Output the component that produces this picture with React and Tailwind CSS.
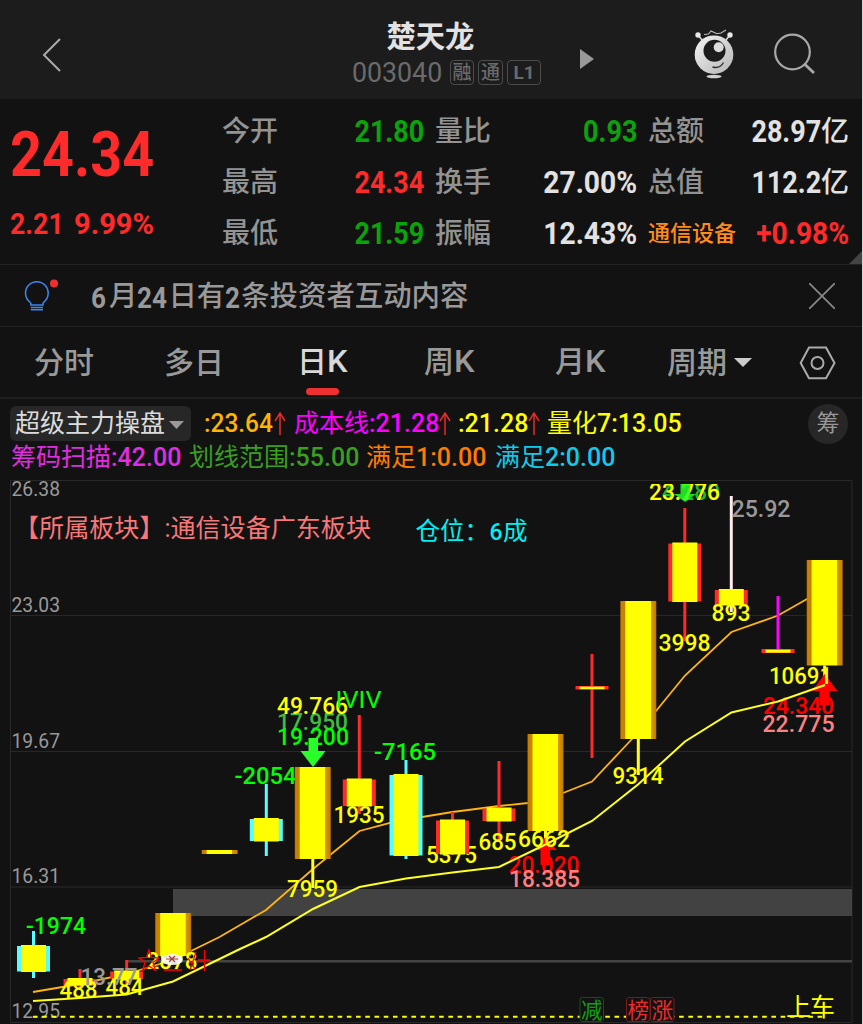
const UP = '#ff2a2a';
const CYAN = '#55ffff';
const YELLOW = '#ffff00';
const GREEN = '#00ff00';

const QUOTES = [
    [
        { label: '今开', value: '21.80', color: 'text-[#0ba30b]' },
        { label: '量比', value: '0.93', color: 'text-[#0ba30b]' },
        { label: '总额', value: '28.97', unit: '亿', color: 'text-[#e2e2e2]' },
    ],
    [
        { label: '最高', value: '24.34', color: 'text-[#ff2a2a]' },
        { label: '换手', value: '27.00%', color: 'text-[#e2e2e2]' },
        { label: '总值', value: '112.2', unit: '亿', color: 'text-[#e2e2e2]' },
    ],
    [
        { label: '最低', value: '21.59', color: 'text-[#0ba30b]' },
        { label: '振幅', value: '12.43%', color: 'text-[#e2e2e2]' },
        { label: '通信设备', value: '+0.98%', color: 'text-[#ff2a2a]', sector: true },
    ],
];

// gold = limit-up day, side = body with coloured edges
const CANDLES = [
    { x: 33.5, type: 'side', color: CYAN, top: 946, bottom: 971.5, high: 931, low: 978 },
    { x: 80, type: 'side', color: UP, top: 979, bottom: 985, high: 969, low: 990 },
    { x: 126.7, type: 'side', color: UP, top: 971.5, bottom: 979, high: 960, low: 984 },
    { x: 173.2, type: 'gold', top: 913, bottom: 956 },
    { x: 219.7, type: 'gold', top: 850, bottom: 854 },
    { x: 266.3, type: 'side', color: CYAN, top: 819, bottom: 841, high: 784, low: 856 },
    { x: 312.8, type: 'gold', top: 767, bottom: 859, low: 888 },
    { x: 359.3, type: 'side', color: UP, top: 779.5, bottom: 806, high: 715, low: 814 },
    { x: 406, type: 'side', color: CYAN, top: 775, bottom: 855.5, high: 760, low: 859 },
    { x: 452.5, type: 'side', color: UP, top: 820.5, bottom: 854, high: 812, low: 855 },
    { x: 499, type: 'side', color: UP, top: 808.5, bottom: 821, high: 761, low: 842 },
    { x: 545.5, type: 'gold', top: 734, bottom: 831, low: 845 },
    { x: 592, type: 'side', color: UP, top: 686, bottom: 689.5, high: 654, low: 758, flat: true },
    { x: 638.3, type: 'gold', top: 601, bottom: 739, low: 775 },
    { x: 684.8, type: 'side', color: UP, top: 543.5, bottom: 601.5, high: 508, low: 641 },
    { x: 731.3, type: 'side', color: UP, wick: '#ffe9e9', top: 590, bottom: 605, high: 496, low: 612 },
    { x: 778, type: 'side', color: UP, wick: '#f0f', top: 649, bottom: 653, high: 596, low: 650, flat: true },
    { x: 824.7, type: 'gold', top: 560, bottom: 665.5, low: 684 },
];

const COST_LINE = '33,992 80,984 126.5,974 173,960 191,951 219.5,937 266,910 313,869 330,855 359.5,831 390,823 406,819.5 422,817 452.5,812 499,806 528,803 545,799 563,793 592,781.5 632,739 656,711 685,675.5 731.5,632 778,615.5 807,599 824,590';
const BASE_LINE = '33,1001 80,998 126.5,994.5 173,981.5 219.5,959 240,949 266,937 313,909 359.5,887 406,878.5 452.5,872.5 499,867 545.5,844.5 592,821 638,784.5 685,741.5 731.5,712.5 778,701.5 825,685';

// text, x, baseline, width, colour
const UNDER_LABELS = [
    ['17.950', 277, 730, 71, '#43b943'],
    ['24.340', 763, 714, 71, '#ff0000'],
    ['20.020', 508.5, 873, 71, '#ff0000'],
    ['-1974', 26, 934, 60, GREEN],
    ['49.766', 277, 714, 71, YELLOW],
    ['19.200', 277, 745, 72, GREEN],
    ['-7165', 374, 760, 62, GREEN],
    ['-2054', 234.5, 784, 62, GREEN],
    ['5375', 426, 862.5, 51, YELLOW],
];

const LABELS = [
    ['893', 711.5, 621, 39, YELLOW],
    ['3998', 658.5, 651, 52, YELLOW],
    ['7959', 287, 897, 51, YELLOW],
    ['1935', 333.5, 823, 51, YELLOW],
    ['685', 478.5, 850, 38, YELLOW],
    ['6662', 518, 846.5, 52, YELLOW],
    ['18.385', 509, 887, 71, '#ff8080'],
    ['9314', 612.5, 784, 51, YELLOW],
    ['10691', 769, 684, 63, YELLOW],
    ['22.775', 762.5, 732, 72, '#ff8080'],
    ['25.92', 731.5, 517, 59, '#999'],
    ['488', 59.5, 998, 38, YELLOW],
    ['484', 105.5, 995, 38, YELLOW],
    ['2878', 146.5, 969, 51, YELLOW],
    ['13.77', 80.5, 985, 57, '#999'],
];

const AXIS = [
    ['26.38', 496],
    ['23.03', 612],
    ['19.67', 748],
    ['16.31', 883],
    ['12.95', 1018],
];

const ChartText = ({ item, size = 24, weight = 500 }) => {
    const [text, x, y, width, color] = item;
    return (
        <text
            x={x}
            y={y}
            fill={color}
            fontSize={size}
            fontWeight={weight}
            textLength={width}
            lengthAdjust="spacingAndGlyphs"
        >
            {text}
        </text>
    );
};

const Candle = ({ c }) => {
    const height = c.bottom - c.top;
    if (c.type === 'gold') {
        return (
            <g>
                {c.low && <rect x={c.x - 1.5} y={c.bottom} width="3" height={c.low - c.bottom} fill="#ffff19" />}
                <rect x={c.x - 18} y={c.top} width="36" height={height} fill="url(#gold)" />
            </g>
        );
    }
    return (
        <g>
            <rect x={c.x - 1.5} y={c.high} width="3" height={c.low - c.high} fill={c.wick || c.color} />
            <rect x={c.x - 16.5} y={c.top} width="33" height={height} fill={c.color} />
            <rect
                x={c.x - 12.5}
                y={c.flat ? c.top + 0.7 : c.top - 1}
                width="25"
                height={c.flat ? height - 1 : height + 1.5}
                fill={YELLOW}
            />
        </g>
    );
};

// Condensed figures: the box has the final width, the glyphs are squeezed into it
const Num = ({ children, className }) => (
    <span className={`inline-block shrink-0 origin-left whitespace-nowrap ${className}`}>{children}</span>
);

const Header = () => (
    <header className="flex h-[99px] bg-[#1c1c1c]">
        <div className="flex w-[352px] items-center pl-[42px] pt-[11px]">
            <svg className="h-[34px] w-[20px]" viewBox="0 0 20 34" fill="none" stroke="#aaa" strokeWidth="2">
                <path d="M18 1 L2 17 L18 33" />
            </svg>
        </div>
        <div className="flex w-[220px] flex-col pt-[20px]">
            <h1 className="pl-[34.500px] text-[29.300px] leading-[35px] font-bold text-[#e2e2e2]">楚天龙</h1>
            <div className="flex h-[35px] items-center text-[#6a6a6a]">
                <Num className="w-[98px] scale-x-[0.955] text-[28px]">003040</Num>
                <div className="flex gap-1 text-[19px] leading-[22px] font-medium">
                    <span className="flex h-[25px] w-[24px] items-center justify-center rounded border border-[#4c4c4c]">融</span>
                    <span className="flex h-[25px] w-[25px] items-center justify-center rounded border border-[#4c4c4c]">通</span>
                    <span className="flex h-[25px] w-[34px] items-center justify-center rounded border border-[#4c4c4c] font-bold">L1</span>
                </div>
            </div>
        </div>
        <div className="flex flex-1 items-start">
            <svg className="mt-[49px] ml-[8px] h-[20px] w-[14px]" viewBox="0 0 14 20" fill="#999">
                <path d="M0 0 L14 10 L0 20Z" />
            </svg>
            <svg className="mt-[28px] ml-[99px] h-[52px] w-[42px]" viewBox="693 28 42 52" fill="none">
                <defs>
                    <linearGradient id="robot" x1="0" y1="0" x2="1" y2="1">
                        <stop offset="0" stopColor="#f4f4f4" />
                        <stop offset="1" stopColor="#b5b5b5" />
                    </linearGradient>
                </defs>
                <path d="M698 35 L702 40 M730 35 L726 40" stroke="#ddd" strokeWidth="1.5" />
                <circle cx="698" cy="35" r="2.700" fill="#e8e8e8" />
                <circle cx="730" cy="35" r="2.700" fill="#e8e8e8" />
                <path d="M704 34.500 L708.500 34 L711 31 L717 33.800 L721 33 L726 30" stroke="#bbb" strokeWidth="1.1" />
                <circle cx="714" cy="54.700" r="19.300" fill="url(#robot)" />
                <circle cx="714.500" cy="50.800" r="11" fill="#1c1c1c" />
                <circle cx="718.700" cy="47.300" r="5" fill="#dcdcdc" />
                <path d="M712.500 67 Q720 69 723.500 62.500" stroke="#333" strokeWidth="1.3" />
                <ellipse cx="714" cy="76.500" rx="7.500" ry="1.800" fill="#d0d0d0" />
            </svg>
            <svg className="mt-[31px] ml-[38px] h-[44px] w-[44px]" viewBox="773 31 44 44" fill="none" stroke="#a8a8a8">
                <circle cx="792.500" cy="52" r="17.300" strokeWidth="2.200" />
                <path d="M804.500 64 L814 73" strokeWidth="2.800" />
            </svg>
        </div>
    </header>
);

const Quote = () => (
    <section className="flex h-[166px] border-b border-[#232323]">
        <div className="w-[222px] pl-[10px] text-[#ff2a2a]">
            <Num className="mt-[18px] block h-[76px] w-[146px] scale-x-[0.885] text-[63px] leading-[76px] font-bold">24.34</Num>
            <div className="mt-[11px] flex h-[38px] items-center text-[30px] font-bold">
                <Num className="w-[64px] scale-x-[0.89]">2.21</Num>
                <Num className="w-[80px] scale-x-[0.97]">9.99%</Num>
            </div>
        </div>
        <div className="flex-1 pt-[7px]">
            {QUOTES.map((row, i) => (
                <div key={i} className="flex h-[51px] items-center">
                    {row.map((q, col) => (
                        <div key={q.label} className={`flex items-center ${col < 2 ? 'w-[213px] pr-[11px]' : 'w-[201px]'}`}>
                            <span
                                className={
                                    q.sector
                                        ? 'text-[22px] font-medium text-[#ff8c1a]'
                                        : 'text-[28px] leading-[44px] font-medium text-[#939393]'
                                }
                            >
                                {q.label}
                            </span>
                            <span className={`flex flex-1 items-center justify-end ${q.color}`}>
                                <span
                                    className={`inline-block origin-right text-[31px] leading-[44px] font-bold whitespace-nowrap ${q.value.endsWith('%') ? 'scale-x-[0.91]' : 'scale-x-[0.87]'}`}
                                >
                                    {q.value}
                                </span>
                                {q.unit && <span className="text-[28px] leading-[44px] font-medium">{q.unit}</span>}
                            </span>
                        </div>
                    ))}
                </div>
            ))}
        </div>
        <svg className="-ml-[13px] h-[13px] w-[13px] self-end" viewBox="0 0 13 13" fill="#444">
            <path d="M13 0 V13 H0Z" />
        </svg>
    </section>
);

const Notice = () => (
    <section className="flex h-[62px] items-center border-b border-[#232323]">
        <svg className="ml-[20px] h-[40px] w-[42px]" viewBox="20 276 42 40" fill="none" stroke="#3d86f0" strokeWidth="1.500">
            <path d="M30.800 305 V303 Q25.500 299 25.500 293 A11.300 11.300 0 0 1 48.200 293 Q48.200 299 43 303 V305Z" />
            <path d="M30.800 307.500 H43 M30.800 309.800 H43" />
            <circle cx="54" cy="283.500" r="4" fill="#f03030" stroke="none" />
        </svg>
        <p className="ml-[29px] flex flex-1 items-center pt-[3px] text-[28.400px] font-medium text-[#999]">
            <Num className="w-[18px] scale-x-[0.87] text-[30px] font-bold">6</Num>月
            <Num className="w-[31px] scale-x-[0.87] text-[30px] font-bold">24</Num>日有
            <Num className="w-[16px] scale-x-[0.87] text-[30px] font-bold">2</Num>条投资者互动内容
        </p>
        <svg className="mr-[27px] h-[26px] w-[26px]" viewBox="0 0 26 26" stroke="#888" strokeWidth="1.700">
            <path d="M0 0 L26 26 M26 0 L0 26" />
        </svg>
    </section>
);

const Tabs = () => (
    <nav className="flex h-[72px] items-center border-b-2 border-[#1e1e1e] pl-[34px] text-[30px] font-medium text-[#999]">
        <span className="w-[130px]">分时</span>
        <span className="w-[133px]">多日</span>
        <span className="relative w-[127px] text-[#d8d8d8]">
            日<span className="inline-block origin-left scale-x-[1.050] text-[31px]">K</span>
            <span className="absolute -bottom-[10px] left-[9px] h-[7px] w-[33px] rounded-full bg-[#ee3030]" />
        </span>
        <span className="w-[131px]">
            周<span className="inline-block origin-left scale-x-[1.050] text-[31px]">K</span>
        </span>
        <span className="w-[112px]">
            月<span className="inline-block origin-left scale-x-[1.050] text-[31px]">K</span>
        </span>
        <span>周期</span>
        <svg className="mt-[1px] ml-[7px] h-[9px] w-[18px]" viewBox="0 0 18 9" fill="#ccc">
            <path d="M0 0 H18 L9 9Z" />
        </svg>
        <svg className="mt-[2px] ml-[47px] h-[34px] w-[37px]" viewBox="799 346 37 34" fill="none" stroke="#aaa" strokeWidth="2">
            <path d="M800.700 363 L809 347.600 H826 L834.500 363 L826 378.300 H809Z" />
            <circle cx="817.500" cy="363" r="6" />
        </svg>
    </nav>
);

const RiseArrow = () => (
    <svg className="h-[23px] w-[12px] shrink-0" viewBox="0 0 12 23" fill="none" stroke="#e82a2a" strokeWidth="1.500">
        <path d="M6 23 V1 M1 9 L6 1 L11 9" />
    </svg>
);

const Indicators = () => (
    <section className="relative h-[77px] pt-[7px] pl-[10px] text-[25px]">
        <div className="flex h-[35px] items-center">
            <div className="mr-[13px] flex h-[35px] w-[181px] shrink-0 items-center rounded-md bg-[#272727] pl-[5px] text-[#dcdcdc]">
                超级主力操盘
                <svg className="mt-[2px] ml-[4px] h-[8px] w-[15px]" viewBox="0 0 15 8" fill="#999">
                    <path d="M0 0 H15 L7.500 8Z" />
                </svg>
            </div>
            <Num className="w-[70px] scale-x-[0.98] font-medium text-[#ffb400]">:23.64</Num>
            <RiseArrow />
            <span className="ml-[8px] text-[#f0f]">成本线</span>
            <Num className="w-[70px] font-medium text-[#f0f]">:21.28</Num>
            <RiseArrow />
            <Num className="ml-[7px] w-[70px] font-medium text-[#ff0]">:21.28</Num>
            <RiseArrow />
            <span className="ml-[7px] text-[#ff0]">量化</span>
            <Num className="w-[84px] font-medium text-[#ff0]">7:13.05</Num>
        </div>
        <div className="flex h-[34px] items-center pl-px">
            <span className="text-[#e02de0]">筹码扫描</span>
            <Num className="w-[78px] font-medium text-[#e02de0]">:42.00</Num>
            <span className="text-[#3a9e22]">划线范围</span>
            <Num className="w-[77px] font-medium text-[#3a9e22]">:55.00</Num>
            <span className="text-[#ff7b00]">满足</span>
            <Num className="w-[79px] font-medium text-[#ff7b00]">1:0.00</Num>
            <span className="text-[#14c8e8]">满足</span>
            <Num className="w-[70px] font-medium text-[#14c8e8]">2:0.00</Num>
        </div>
        <div className="absolute top-[5px] left-[808px] flex h-[40px] w-[40px] items-center justify-center rounded-full bg-[#272727] text-[23px] text-[#999]">
            筹
        </div>
    </section>
);

const KLineChart = () => (
    <svg className="h-[548px] w-[862px]" viewBox="0 476 862 548" fontFamily='Roboto, "Noto Sans CJK SC", sans-serif'>
        <defs>
            <linearGradient id="gold">
                <stop offset="0" stopColor="#a86a10" />
                <stop offset="0.030" stopColor="#c88200" />
                <stop offset="0.120" stopColor="#c88200" />
                <stop offset="0.155" stopColor="#ffff00" />
                <stop offset="0.840" stopColor="#ffff00" />
                <stop offset="0.845" stopColor="#d89c00" />
                <stop offset="0.970" stopColor="#c88200" />
                <stop offset="1" stopColor="#a86a10" />
            </linearGradient>
            <clipPath id="plot">
                <rect x="10" y="484" width="843" height="540" />
            </clipPath>
        </defs>

        <path
            d="M10.500 480.500 H852 V1022.500 H10.500Z M10.500 615.500 H852 M10.500 751.500 H852 M10.500 887 H852"
            fill="none"
            stroke="#282828"
        />
        <rect x="173" y="889" width="679" height="27" fill="#424242" />
        <path d="M126 961.300 H852" stroke="#444" strokeWidth="2.500" />

        {AXIS.map(([text, y]) => (
            <ChartText key={text} item={[text, 11.5, y, 48.5, '#999']} size={20.5} weight={400} />
        ))}

        <polyline points={COST_LINE} fill="none" stroke="#ffb410" strokeWidth="1.800" />
        {UNDER_LABELS.map((item) => (
            <ChartText key={item[0]} item={item} />
        ))}
        <ChartText item={['IVIV', 335.5, 707.5, 46, GREEN]} weight={400} />
        {CANDLES.map((c) => (
            <Candle key={c.x} c={c} />
        ))}

        {/* sell / buy arrows */}
        <path d="M308.500 738 H318 V751 H325.500 L313 767 L300.500 751 H308.500Z" fill="#28ff28" />
        <path d="M545.500 837 L557 850 H550 V865 H540.500 V850 H535Z" fill="#f00" />
        <path d="M824.700 674 L837.500 691 H829.500 V705 H819.500 V691 H812Z" fill="#f00" />

        <polyline points={BASE_LINE} fill="none" stroke="#ffff20" strokeWidth="2" />
        {LABELS.map((item) => (
            <ChartText key={item[0]} item={item} />
        ))}

        <g clipPath="url(#plot)">
            <ChartText item={['4.280', 662, 500, 58, '#18b838']} />
            <ChartText item={['23.776', 649, 500, 71, YELLOW]} />
            <path d="M680.500 484 H690 V494 H696 L685 502 L674 494 H680.500Z" fill="#28ff28" opacity="0.850" />
        </g>

        {/* signal marks around the first limit-up day */}
        <ellipse cx="172" cy="959.500" rx="11" ry="5.500" fill="#fff" opacity="0.900" />
        <path d="M166 959 H178 M169 956 L175 962 M175 956 L169 962" stroke="#a04040" strokeWidth="1.200" />
        <path
            d="M149 950 L151.600 957.500 L159 958 L153 962.500 L155.500 970.500 L149 966 L142.500 970.500 L145 962.500 L139 958 L146.400 957.500Z M164 970 H182 M188 958 L195 969 M190 970 L196 952 M204.500 950 V971 M198 960 H210"
            fill="none"
            stroke="#f00"
            strokeWidth="1.300"
        />

        <path d="M33 1016.700 H825" stroke="#ff0" strokeWidth="2" strokeDasharray="4.600 4.630" />

        <text x="14" y="537" fontSize="25" fill="#f87878" textLength="357" lengthAdjust="spacingAndGlyphs">【所属板块】:通信设备广东板块</text>
        <text x="415.500" y="540" fontSize="24.500" fill="#00f0f0">仓位：</text>
        <ChartText item={['6', 489.5, 540, 13, '#00f0f0']} />
        <text x="503" y="540" fontSize="24.500" fill="#00f0f0">成</text>

        <g fill="#121212">
            <rect x="580" y="997.500" width="23.500" height="24" rx="2.500" stroke="#145014" />
            <rect x="626.500" y="997.500" width="23.500" height="24" rx="2.500" stroke="#781c1c" />
            <rect x="650.500" y="997.500" width="23.500" height="24" rx="2.500" stroke="#781c1c" />
        </g>
        <g fontSize="21.500">
            <text x="581" y="1017.500" fill="#12a012">减</text>
            <text x="627.500" y="1017.500" fill="#f02a2a">榜</text>
            <text x="651.500" y="1017.500" fill="#f02a2a">涨</text>
        </g>
        <text x="786" y="1015.500" fontSize="25" fill="#ff0" textLength="49">上车</text>
    </svg>
);

export default function App() {
    return (
        <div className='h-[1024px] w-[863px] overflow-hidden border-r border-[#d4d4d4] bg-[#121212] [font-family:Roboto,"Noto_Sans_CJK_SC",sans-serif]'>
            <Header />
            <Quote />
            <Notice />
            <Tabs />
            <Indicators />
            <KLineChart />
        </div>
    );
}
